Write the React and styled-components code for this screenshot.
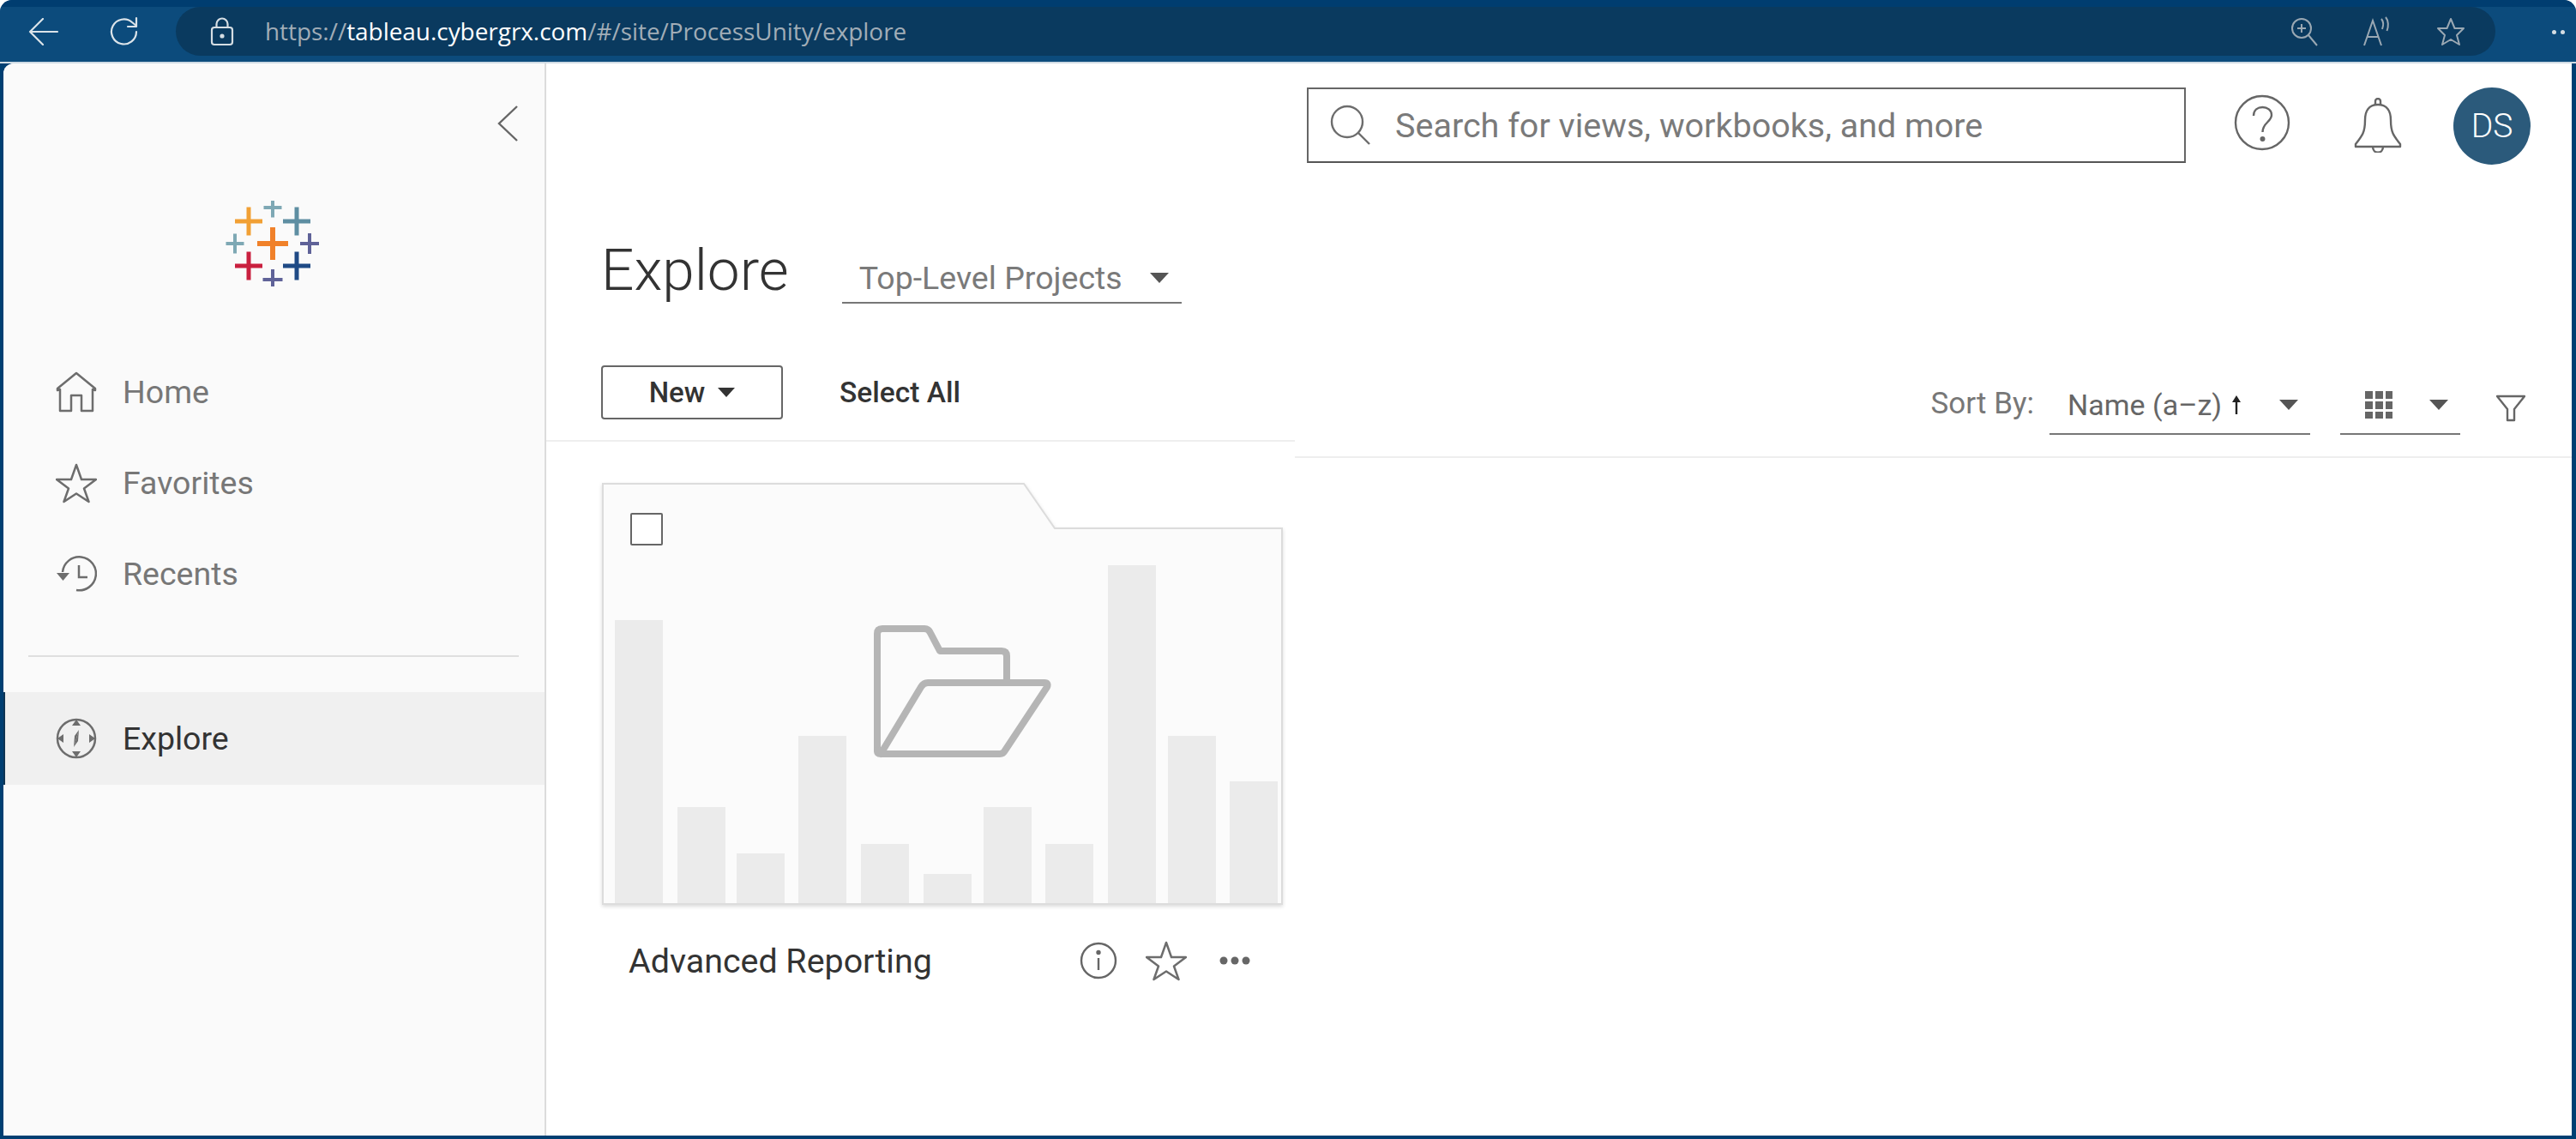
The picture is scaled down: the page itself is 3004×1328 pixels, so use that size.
import React from 'react'
import styled, { createGlobalStyle } from 'styled-components'

const GlobalStyle = createGlobalStyle`
  html, body {
    margin: 0;
    background: #fff;
    font-family: Roboto, "Liberation Sans", sans-serif;
  }
`

const Frame = styled.div`
  width: 3004px;
  height: 1328px;
  box-sizing: border-box;
  display: flex;
  flex-direction: column;
  overflow: hidden;
  background: #003f72;
  border-radius: 14px 14px 0 0;
  padding: 0 5px 4px 4px;
`

const ChromeBar = styled.header`
  height: 74px;
  flex-shrink: 0;
  box-sizing: border-box;
  margin-right: -5px;
  margin-left: -4px;
  padding: 8px 0 8px 0;
  display: flex;
  align-items: stretch;
  background: linear-gradient(#003d70 0, #003d70 8px, #0c4b7c 8px, #0c4b7c 72px, #cfdbe4 72px);
  border-radius: 14px 14px 0 0;
`

const NavButtons = styled.div`
  width: 205px;
  flex-shrink: 0;
  display: flex;
  align-items: center;
  padding-left: 33px;
  gap: 58px;
  box-sizing: border-box;
`

const AddressPill = styled.div`
  width: 2705px;
  height: 57px;
  flex-shrink: 0;
  box-sizing: border-box;
  padding: 0 35px 0 40px;
  border-radius: 30px;
  background: #0a3a5f;
  display: flex;
  align-items: center;
  color: #a1adb7;
`

const Url = styled.div`
  margin-left: 36px;
  margin-top: -2px;
  flex: 1;
  font-family: "Open Sans", sans-serif;
  font-size: 27.9px;
  white-space: nowrap;
  strong { font-weight: 400; color: #fff; }
`

const PillTools = styled.div`
  display: flex;
  align-items: center;
  gap: 52px;
`

const MoreDots = styled.div`
  margin-left: 66px;
  display: flex;
  gap: 5px;
  align-items: center;
  i { width: 5px; height: 5px; border-radius: 50%; background: #d5dde3; }
`

const Page = styled.div`
  flex: 1;
  display: flex;
  min-height: 0;
  background: #fff;
  border-radius: 12px 0 0 0;
  overflow: hidden;
`

const Sidebar = styled.aside`
  width: 633px;
  flex-shrink: 0;
  box-sizing: border-box;
  background: #fafafa;
  border-right: 2px solid #dcdcdc;
  display: flex;
  flex-direction: column;
`

const Collapse = styled.div`
  display: flex;
  justify-content: flex-end;
  padding: 48px 30px 0 0;
  height: 46px;
`

const Logo = styled.div`
  display: flex;
  justify-content: center;
  padding: 66px 3px 70px 0;
`

const NavItem = styled.div`
  height: ${(p) => (p.$active ? 108 : 106)}px;
  box-sizing: border-box;
  display: flex;
  align-items: center;
  gap: 30px;
  padding-left: 61px;
  font-size: 37.5px;
  font-weight: 400;
  color: ${(p) => (p.$active ? '#333' : '#777')};
  background: ${(p) => (p.$active ? '#f0f0f0' : 'transparent')};
  box-shadow: ${(p) => (p.$active ? 'inset 2px 0 0 #0f3554' : 'none')};
`

const Divider = styled.hr`
  border: 0;
  height: 2px;
  background: #dfdfdf;
  margin: 42px 30px 41px 29px;
`

const Main = styled.main`
  flex: 1;
  min-width: 0;
  display: flex;
  flex-direction: column;
`

const TopRow = styled.div`
  height: 116px;
  box-sizing: border-box;
  padding-top: 28px;
  padding-right: 48px;
  display: flex;
  justify-content: flex-end;
  align-items: flex-start;
`

const SearchBox = styled.div`
  width: 1025px;
  height: 88px;
  box-sizing: border-box;
  border: 2px solid #666;
  border-bottom-color: #555;
  display: flex;
  align-items: center;
  gap: 28px;
  padding-left: 25px;
  font-size: 39.5px;
  font-weight: 400;
  color: #7a7a7a;
`

const HeadIcon = styled.div`
  margin-left: ${(p) => p.$gap}px;
  display: flex;
  margin-top: ${(p) => p.$top}px;
`

const Avatar = styled.div`
  margin-left: 58px;
  width: 90px;
  height: 90px;
  border-radius: 50%;
  background: #2b5a7b;
  color: #fff;
  font-size: 39px;
  font-weight: 300;
  display: flex;
  align-items: center;
  justify-content: center;
`

const TitleRow = styled.div`
  height: 164px;
  box-sizing: border-box;
  padding-left: 64px;
  margin-bottom: 72px;
  display: flex;
  align-items: flex-end;
  gap: 62px;
`

const Title = styled.h1`
  margin: 0 0 1px;
  font-size: 67.500px;
  line-height: 76px;
  font-weight: 300;
  color: #333;
`

const ProjectSelect = styled.div`
  width: 396px;
  height: 58px;
  box-sizing: border-box;
  padding: 0 15px 0 20px;
  border-bottom: 2px solid #777;
  display: flex;
  align-items: center;
  justify-content: space-between;
  font-size: 37.5px;
  font-weight: 400;
  color: #7a7a7a;
`

const Caret = styled.span`
  display: inline-block;
  width: 0;
  height: 0;
  flex-shrink: 0;
  border-left: ${(p) => p.$size}px solid transparent;
  border-right: ${(p) => p.$size}px solid transparent;
  border-top: ${(p) => Math.round(p.$size * 1.05)}px solid ${(p) => p.$color || '#555'};
`

const Toolbar = styled.div`
  display: flex;
  align-items: flex-start;
`

const LeftTools = styled.div`
  width: 873px;
  height: 89px;
  flex-shrink: 0;
  box-sizing: border-box;
  padding-left: 64px;
  border-bottom: 2px solid #eee;
  display: flex;
  align-items: flex-start;
  gap: 66px;
`

const NewButton = styled.button`
  width: 212px;
  height: 63px;
  box-sizing: border-box;
  padding: 0;
  background: #fff;
  border: 2px solid #666;
  border-radius: 4px;
  display: flex;
  align-items: center;
  justify-content: center;
  gap: 15px;
  font-family: inherit;
  font-size: 33px;
  font-weight: 500;
  color: #333;
`

const SelectAll = styled.div`
  height: 63px;
  line-height: 63px;
  font-size: 33.500px;
  font-weight: 500;
  color: #333;
`

const RightTools = styled.div`
  flex: 1;
  height: 108px;
  box-sizing: border-box;
  padding-right: 54px;
  padding-bottom: 25px;
  border-bottom: 2px solid #eee;
  display: flex;
  justify-content: flex-end;
  align-items: flex-end;
`

const SortLabel = styled.div`
  font-size: 35px;
  font-weight: 400;
  color: #777;
  align-self: center;
  margin-right: 18px;
  margin-top: 8px;
`

const Dropdown = styled.div`
  width: ${(p) => p.$width}px;
  height: 60px;
  margin-left: ${(p) => p.$gap || 0}px;
  box-sizing: border-box;
  padding: 0 14px 8px 21px;
  border-bottom: 2px solid #777;
  display: flex;
  align-items: center;
  justify-content: space-between;
  font-size: 34px;
  font-weight: 400;
  color: #666;
`

const SortName = styled.span`
  display: flex;
  align-items: center;
  gap: 12px;
`

const ViewGrid = styled.svg`
  margin-left: 8px;
`

const FilterIcon = styled.div`
  display: flex;
  margin-left: 42px;
  padding-bottom: 15px;
`

const CardArea = styled.section`
  padding: 29px 0 0 65px;
`

const Card = styled.article`
  width: 794px;
`

const Thumb = styled.div`
  position: relative;
  height: 492px;
  filter: drop-shadow(0 2px 2px rgba(0, 0, 0, 0.14));
  svg { display: block; }
`

const Checkbox = styled.span`
  position: absolute;
  left: 33px;
  top: 35px;
  width: 38px;
  height: 38px;
  box-sizing: border-box;
  background: #fff;
  border: 2px solid #666;
  border-radius: 2px;
`

const CardFooter = styled.div`
  height: 66px;
  margin-top: 32px;
  padding-left: 31px;
  display: flex;
  align-items: center;
`

const CardName = styled.div`
  width: 526px;
  font-size: 39.400px;
  color: #333;
  white-space: nowrap;
`

const CardActions = styled.div`
  display: flex;
  align-items: center;
  gap: 33px;
`

const MoreIcon = styled.svg`
  margin-left: 5px;
`

const Cross = ({ x, y, w, h, t, color }) => (
  <g fill={color}>
    <rect x={x - w / 2} y={y - t / 2} width={w} height={t} />
    <rect x={x - t / 2} y={y - h / 2} width={t} height={h} />
  </g>
)

const TableauLogo = () => (
  <svg width="120" height="100" viewBox="258 235 120 100">
    <Cross x={318} y={285} w={36} h={38} t={6} color="#f0812a" />
    <Cross x={290} y={259} w={32} h={33} t={5} color="#f1a034" />
    <Cross x={346} y={259} w={32} h={33} t={5} color="#5e8ea2" />
    <Cross x={290} y={311} w={32} h={33} t={5} color="#c9203f" />
    <Cross x={346} y={311} w={32} h={33} t={5} color="#1f4a85" />
    <Cross x={318} y={243} w={21} h={23} t={4} color="#7ea8b4" />
    <Cross x={274} y={285} w={21} h={23} t={4} color="#7ea8b4" />
    <Cross x={361} y={285} w={22} h={24} t={4} color="#5f6298" />
    <Cross x={318} y={327} w={23} h={24} t={4} color="#5f6298" />
  </svg>
)

const Star = ({ size, color = '#6d6d6d', width = 2 }) => (
  <svg width={size} height={size} viewBox="0 0 48 48" fill="none" stroke={color} strokeWidth={width} strokeLinejoin="round">
    <path d="M24 3l6 17h17L33 30.500 38.500 46 24 36.500 9.500 46 15 30.500 1 20h17z" />
  </svg>
)

const HomeIcon = () => (
  <svg width="48" height="48" viewBox="0 0 48 48" fill="none" stroke="#6d6d6d" strokeWidth="2.500" strokeLinejoin="round">
    <path d="M2 20L24 2l22 18v2l-3-1v25H30V28H18v18H5V21l-3 1z" />
  </svg>
)

const RecentIcon = () => (
  <svg width="48" height="42" viewBox="0 0 48 42" fill="none" stroke="#6d6d6d" strokeWidth="2.500">
    <path d="M8 19A19.500 19.500 0 1 1 24 40" />
    <path d="M1 20h15l-7.500 9z" fill="#6d6d6d" stroke="none" />
    <path d="M27 11v14h10" />
  </svg>
)

const CompassIcon = () => (
  <svg width="48" height="48" viewBox="0 0 48 48" fill="none" stroke="#6d6d6d" strokeWidth="2.500">
    <circle cx="24" cy="24" r="22" />
    <path d="M24 2l-5 7h10zM24 46l-5-7h10zM2 24l7-5v10zM46 24l-7-5v10z" fill="#6d6d6d" stroke="none" />
    <path d="M27 14l-6 20 1-13z" fill="#6d6d6d" stroke="none" />
    <path d="M27 14l-1 13-5 7z" fill="#6d6d6d" stroke="none" />
  </svg>
)

const bars = [
  [15, 160], [88, 378], [157, 432], [229, 295], [302, 421],
  [375, 456], [445, 378], [517, 421], [590, 96], [660, 295], [732, 348],
]

const FolderThumb = () => (
  <svg width="794" height="492" viewBox="0 0 794 492">
    <path d="M1 1H492L528 53H793V491H1z" fill="#fbfbfb" stroke="#dcdcdc" strokeWidth="2" />
    {bars.map(([x, y]) => (
      <rect key={x} x={x} y={y} width="56" height={490 - y} fill="#ebebeb" />
    ))}
    <g fill="none" stroke="#b5b5b5" strokeWidth="8" strokeLinejoin="round" strokeLinecap="round">
      <path d="M321 312V176q0-6 6-6h49q5 0 7 5l11 21h72q6 0 6 6v31" />
      <path d="M325 316L372 238q3-5 8-5h136q5 0 3 5l-49 74q-2 4-6 4H325q-4 0-4-4" />
    </g>
  </svg>
)

export default function App() {
  return (
    <Frame>
      <GlobalStyle />
      <ChromeBar>
        <NavButtons>
          <svg width="36" height="32" viewBox="0 0 36 32" fill="none" stroke="#dbe3e9" strokeWidth="2.200" strokeLinecap="round" strokeLinejoin="round">
            <path d="M34 16H2M17 1L2 16l15 15" />
          </svg>
          <svg width="36" height="36" viewBox="0 0 36 36" fill="none" stroke="#dbe3e9" strokeWidth="2.200" strokeLinecap="round" strokeLinejoin="round">
            <path d="M32 18a14.500 14.500 0 1 1-5-11l5 4" />
            <path d="M32 2v10H22" />
          </svg>
        </NavButtons>
        <AddressPill>
          <svg width="28" height="34" viewBox="0 0 28 34" fill="none" stroke="#d5dde3" strokeWidth="2.200">
            <rect x="2" y="12" width="24" height="20" rx="3" />
            <path d="M7.500 12V8a6.500 6.500 0 0 1 13 0v4" />
            <circle cx="14" cy="22" r="1.500" fill="#d5dde3" />
          </svg>
          <Url>https://<strong>tableau.cybergrx.com</strong>/#/site/ProcessUnity/explore</Url>
          <PillTools>
            <svg width="32" height="34" viewBox="0 0 32 34" fill="none" stroke="#9aa8b3" strokeWidth="2">
              <circle cx="13" cy="13" r="11" />
              <path d="M21 21l10 12M13 8v10M8 13h10" />
            </svg>
            <svg width="34" height="36" viewBox="0 0 34 36" fill="none" stroke="#9aa8b3" strokeWidth="2">
              <path d="M2 34L12 5l10 29M6 24h12" />
              <path d="M22 3c2.500 3 2.500 8 1 12M27 1c3.500 4 3.500 11 1.500 16" />
            </svg>
            <svg width="34" height="34" viewBox="0 0 34 34" fill="none" stroke="#9aa8b3" strokeWidth="2" strokeLinejoin="round">
              <path d="M17 2l4.500 11H32l-8 8 3 11-10-6-10 6 3-11-8-8h10.500z" />
            </svg>
          </PillTools>
        </AddressPill>
        <MoreDots><i /><i /></MoreDots>
      </ChromeBar>
      <Page>
        <Sidebar>
          <Collapse>
            <svg width="26" height="44" viewBox="0 0 26 44" fill="none" stroke="#666" strokeWidth="2.400">
              <path d="M24 2L3 22l21 20" />
            </svg>
          </Collapse>
          <Logo><TableauLogo /></Logo>
          <NavItem><HomeIcon />Home</NavItem>
          <NavItem><Star size={48} width={2.500} />Favorites</NavItem>
          <NavItem><RecentIcon />Recents</NavItem>
          <Divider />
          <NavItem $active><CompassIcon />Explore</NavItem>
        </Sidebar>
        <Main>
          <TopRow>
            <SearchBox>
              <svg width="48" height="48" viewBox="0 0 48 48" fill="none" stroke="#6d6d6d" strokeWidth="2.400">
                <circle cx="20" cy="20" r="18" />
                <path d="M33 33l13 13" />
              </svg>
              Search for views, workbooks, and more
            </SearchBox>
            <HeadIcon $gap={56} $top={8}>
              <svg width="66" height="66" viewBox="0 0 66 66" fill="none" stroke="#666" strokeWidth="2.400">
                <circle cx="33" cy="33" r="31" />
                <path d="M23 25c0-7 5-10 10.500-10S44 18.500 44 24c0 8-10.500 9-10.500 20" />
                <circle cx="33.500" cy="52" r="1.800" fill="#666" />
              </svg>
            </HeadIcon>
            <HeadIcon $gap={72} $top={12}>
              <svg width="60" height="64" viewBox="0 0 60 64" fill="none" stroke="#666" strokeWidth="2.400" strokeLinejoin="round">
                <path d="M30 8c-11 0-15 8-15 18 0 14-3 18-11 28v3h52v-3c-8-10-11-14-11-28 0-10-4-18-15-18z" />
                <path d="M27 8V4a3 3 0 0 1 6 0v4M24 57c0 9 12 9 12 0" />
              </svg>
            </HeadIcon>
            <Avatar>DS</Avatar>
          </TopRow>
          <TitleRow>
            <Title>Explore</Title>
            <ProjectSelect>
              Top-Level Projects
              <Caret $size={11} />
            </ProjectSelect>
          </TitleRow>
          <Toolbar>
            <LeftTools>
              <NewButton>New <Caret $size={10} $color="#333" /></NewButton>
              <SelectAll>Select All</SelectAll>
            </LeftTools>
            <RightTools>
              <SortLabel>Sort By:</SortLabel>
              <Dropdown $width={304}>
                <SortName>
                  Name (a–z)
                  <svg width="10" height="22" viewBox="0 0 10 22" fill="#222"><path d="M5 0l5 8H6.200v14H3.800V8H0z" /></svg>
                </SortName>
                <Caret $size={11} />
              </Dropdown>
              <Dropdown $width={140} $gap={35}>
                <ViewGrid width="32" height="32" viewBox="0 0 32 32" fill="#666">
                  {[0, 12, 24].flatMap((y) => [0, 12, 24].map((x) => (
                    <rect key={`${x}-${y}`} x={x} y={y} width="9" height="9" />
                  )))}
                </ViewGrid>
                <Caret $size={11} />
              </Dropdown>
              <FilterIcon>
                <svg width="34" height="32" viewBox="0 0 34 32" fill="none" stroke="#666" strokeWidth="2.400" strokeLinejoin="round">
                  <path d="M1 2h32L21 17v13h-8V17z" />
                </svg>
              </FilterIcon>
            </RightTools>
          </Toolbar>
          <CardArea>
            <Card>
              <Thumb>
                <FolderThumb />
                <Checkbox />
              </Thumb>
              <CardFooter>
                <CardName>Advanced Reporting</CardName>
                <CardActions>
                  <svg width="44" height="44" viewBox="0 0 44 44" fill="none" stroke="#666" strokeWidth="2.400">
                    <circle cx="22" cy="22" r="20" />
                    <path d="M22 19v14" />
                    <circle cx="22" cy="12.500" r="1.500" fill="#666" />
                  </svg>
                  <Star size={48} width={2.500} />
                  <MoreIcon width="36" height="10" viewBox="0 0 36 10" fill="#666">
                    <circle cx="5" cy="5" r="4.500" /><circle cx="18" cy="5" r="4.500" /><circle cx="31" cy="5" r="4.500" />
                  </MoreIcon>
                </CardActions>
              </CardFooter>
            </Card>
          </CardArea>
        </Main>
      </Page>
    </Frame>
  )
}
